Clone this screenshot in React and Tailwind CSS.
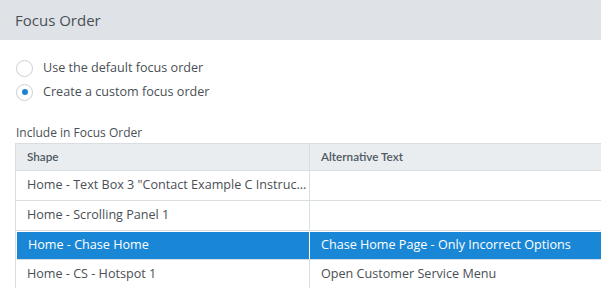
const rows = [
  { shape: 'Home - Text Box 3 "Contact Example C Instruc...', alt: '', h: 'h-[30px]' },
  { shape: 'Home - Scrolling Panel 1', alt: '', h: 'h-[30px]' },
  { shape: 'Home - Chase Home', alt: 'Chase Home Page - Only Incorrect Options', selected: true, h: 'h-[29px]' },
  { shape: 'Home - CS - Hotspot 1', alt: 'Open Customer Service Menu', h: 'h-[29px]' },
]

const Radio = ({ checked, label }) => (
  <label className="flex items-center h-6 gap-[10px]">
    <span className="w-[17px] h-[17px] rounded-full border border-[#c9cfd5] bg-white flex items-center justify-center">
      {checked && <span className="w-[6px] h-[6px] rounded-full bg-[#1a84d4]" />}
    </span>
    <span className="text-[12.6px] text-[#4a4f55]">{label}</span>
  </label>
)

export default function App() {
  return (
    <div className="w-[601px] h-[288px] overflow-hidden bg-white font-['Open_Sans',sans-serif]">
      {/* Title bar */}
      <div className="h-10 bg-[#dfe3e8] flex items-center px-[15px]">
        <h1 className="text-[15px] text-[#4a4f55]">Focus Order</h1>
      </div>

      {/* Options */}
      <div className="pl-4 pt-[16px] flex flex-col">
        <Radio label="Use the default focus order" />
        <Radio checked label="Create a custom focus order" />
      </div>

      <p className="pl-4 mt-[21px] text-[12px] text-[#4a4f55] leading-[16px]">Include in Focus Order</p>

      {/* Table */}
      <div className="ml-[15px] mt-[2px] w-[600px] border-l border-t border-[#d9dee3]">
        <div className="flex h-[27px] bg-[#e9edf0] border-b border-[#d9dee3] font-['Lato',sans-serif] font-semibold text-[11.7px] text-[#4f5963]">
          <div className="w-[294px] px-[11px] flex items-center border-r border-[#d9dee3]">Shape</div>
          <div className="flex-1 px-[11px] flex items-center">Alternative Text</div>
        </div>
        {rows.map((r, i) => (
          <div
            key={i}
            className={`flex ${r.h} border-b border-[#d9dee3] text-[12.6px] ${
              r.selected ? 'bg-[#1a87d6] text-white border-l border-t border-l-white border-t-white' : 'text-[#4a4f55]'
            }`}
          >
            <div className={`pl-[11px] pr-[2px] flex items-center border-r whitespace-nowrap ${r.selected ? 'w-[293px] border-white' : 'w-[294px] border-[#d9dee3]'}`}>
              {r.shape}
            </div>
            <div className="flex-1 px-[11px] flex items-center whitespace-nowrap">{r.alt}</div>
          </div>
        ))}
      </div>
    </div>
  )
}
